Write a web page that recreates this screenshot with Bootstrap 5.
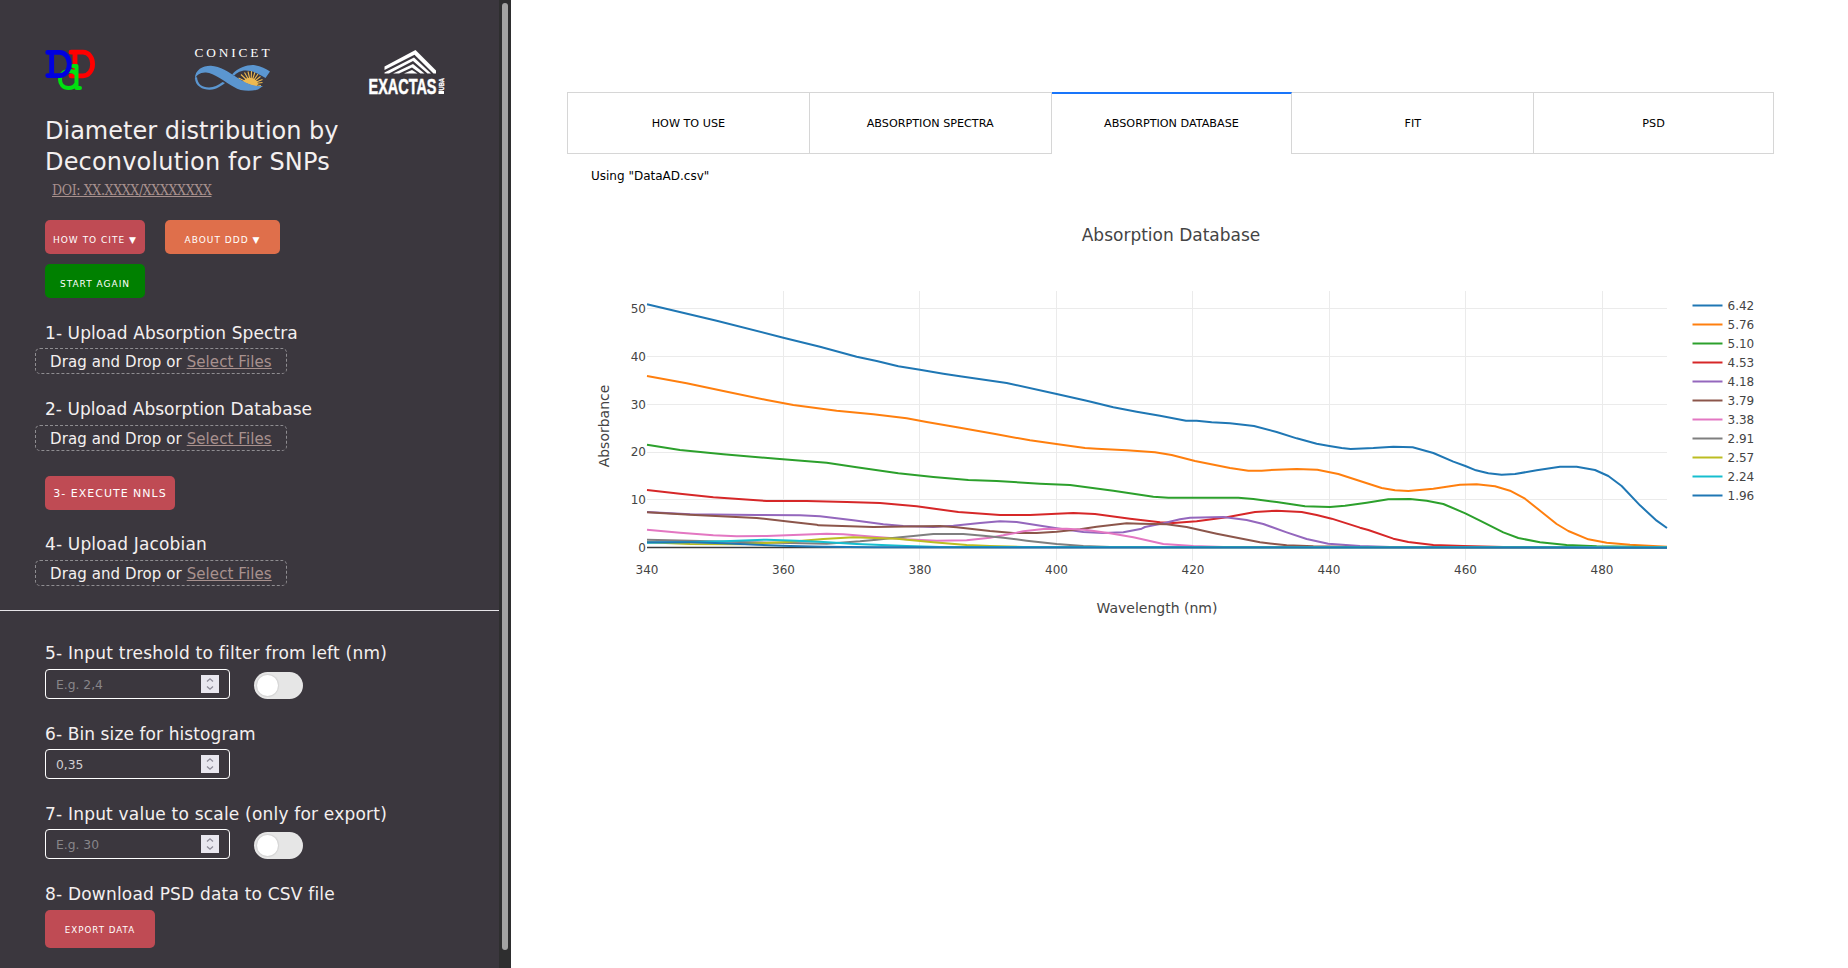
<!DOCTYPE html>
<html lang="en">
<head>
<meta charset="utf-8">
<meta name="viewport" content="width=device-width, initial-scale=1">
<title>Diameter distribution by Deconvolution for SNPs</title>
<link href="https://cdn.jsdelivr.net/npm/bootstrap@5.3.0/dist/css/bootstrap.min.css" rel="stylesheet">
<style>
body{font-family:"DejaVu Sans",sans-serif;background:#fff;height:968px;overflow:hidden}
.side{width:511px;background:#3b373e;color:#f4f0f0}
.side-body{width:499px;padding-top:46px}
.track{width:12px;background:#2e2e2f}
.thumb{width:6px;height:947px;margin:3px;border-radius:3px;background:#a3a3a3}
.pad{padding-left:45px}
.logos{height:70px}
h1{font-size:24px;line-height:31px;margin:0}
h1 .second{letter-spacing:.17px}
h2{font-size:17px;line-height:20px;margin:0}
.ls-a{letter-spacing:.09px}
.ls-b{letter-spacing:.04px}
.ls-c{letter-spacing:.15px}
.ls-d{letter-spacing:.23px}
.ls-e{letter-spacing:.1px}
.ls-f{letter-spacing:.2px}
.doi{font:14px/18px "DejaVu Serif Condensed","DejaVu Serif",serif;font-stretch:condensed;letter-spacing:-.38px;margin:3px 0 0 7px}
.side a{color:#a8918e}
.act{font-size:9px;letter-spacing:1px;height:34px;padding:6px 0 0 0;border:0;border-radius:5px;color:#fff;background:#bf4b54;line-height:1}
.act:hover{color:#fff;background:#a8424a}
.w100{width:100px}
.orange{background:#df6f4b;width:115px}
.green{background:#008000}
.exec{width:130px;font-size:11px;padding-top:0}
.export{width:110px;height:38px;padding-top:2px;font-size:8.7px}
.drop{width:252px;height:26px;margin:5px 0 0 -10px;border:1px dashed #8f8d91;border-radius:5px;font-size:15px;line-height:26px;letter-spacing:.09px;padding-left:14px}
.rule{height:1px;background:#e6e4e8;margin-top:24px}
.num{width:185px;height:30px;border:1px solid #fff;border-radius:4px;font-size:12.3px;color:#d2d0d3;padding:0 10px}
.num span{padding-top:2px}
.num .ph{color:#88868a}
.spin{width:18px;height:18px;background:#e9e7ef}
.tog{width:49px;height:27px;border-radius:14px;background:#e6e6e6;padding:3px;margin:3px 0 0 24px}
.knob{width:21px;height:21px;border-radius:50%;background:#fff;box-shadow:0 0 1px 1px #d4d4d4}
.main-pane{padding:92px 74px 0 56px}
.tabs-row{height:62px}
.tab-cell{flex:242 1 0;border:1px solid #d6d6d6;border-left-width:0;padding-top:2px;font-size:11.2px;color:#000}
.tab-cell:first-child{border-left-width:1px}
.tab-cell.on{flex-grow:241;border-top:2px solid #1975fa;border-bottom:0;padding-top:1px}
.tab-cell:last-child{flex-grow:240}
.using{font-size:12px;line-height:20px;color:#000;margin:12px 0 0 24px}
text{white-space:pre}
</style>
</head>
<body>
<div class="d-flex h-100">
<aside class="side d-flex flex-shrink-0">
<div class="side-body">
<svg class="logos d-block" width="499" viewBox="0 46 499 70">
  <g fill="none" stroke-width="4.8" stroke-linecap="round" stroke-linejoin="round">
    <path stroke="#f00" d="M71 52.2H83C89 52.2 92.6 58 92.6 64S89 75.800 83 75.800H71M75 52.2V75.800"/>
    <path stroke="#00e010" d="M73 66H76.500V88H80M76 74C74 71 71.500 71 69.500 71C63 71 60 75 60 79.500S63 88 68.500 88C73 88 75 86 76 84" stroke-width="4"/>
    <path stroke="#0000e0" d="M47.700 52.4H59.500C65.500 52.4 69.300 58 69.300 64S65.500 75.600 59.500 75.600H47.700M51.700 52.4V75.600"/>
  </g>
  <text x="194.500" y="57" font-family="Liberation Serif,serif" font-size="13.300" fill="#fff" textLength="75">CONICET</text>
  <path stroke="#edb950" stroke-width="1.100" fill="none" d="M251 84L238.500 78M251 84L241 74.500M251 84L244.500 72.500M251 84L248 71.500M251 84L251.500 71M251 84L255 72M251 84L258 74M251 84L260.500 76.500M251 84L262.500 79.500M251 84L262.500 82.500M251 84L261 85.500"/>
  <path fill="#edb950" d="M243 82A8 7.500 0 0 1 258 84L256 87Z"/>
  <path fill="#5b96d0" d="M195 80C194 70 203 65.500 211 65.800C220 66.500 229 72 237 77.500C246 83.500 253 86.500 263 86L258 89.500C250 92 240 91 234 87C225 82 214 73 206 72.500C200 72.200 196 75 195 80Z"/>
  <path fill="#5b96d0" d="M195 78C195 86 203 90 210 89.800C217 89.400 221 86 225 83L222.500 82C218 85 214 87.500 209 87.500C202 87.500 197.500 84 197 77Z"/>
  <path fill="#5b96d0" d="M232 74.500C239 67 248 64.500 255 65.200C261 66 266 69 270 71.500L265.500 78C257 72.500 249 69.500 242 71C238 72 236 73.500 234.500 75.500Z"/>
  <g fill="#fff">
    <path d="M384.500 66.500L415.500 50L436 70.500V73.500H433.500L414.500 54.800L384.500 70Z"/>
    <path d="M384.500 73.500V72.500L414 57.500L431 73.500H427.500L413 61L389 73.500Z"/>
    <path d="M393 73.500L413 64L424.500 73.500H420.500L412 67.500L399 73.500Z"/>
    <path d="M404 73.500L412 70L417.500 73.500Z"/>
  </g>
  <text x="368.500" y="94" font-family="Liberation Sans Narrow,Liberation Sans,sans-serif" font-weight="bold" font-size="22.500" fill="#fff" stroke="#fff" stroke-width=".5" textLength="68" lengthAdjust="spacingAndGlyphs">EXACTAS</text>
  <rect x="438.500" y="91" width="5.500" height="3" fill="#fff"/>
  <text transform="translate(444 90.500) rotate(-90)" font-family="Liberation Sans,sans-serif" font-weight="bold" font-size="7.500" fill="#fff" stroke="#fff" stroke-width=".3" textLength="12.500" lengthAdjust="spacingAndGlyphs">UBA</text>
</svg>
<div class="pad">
<h1 class="fw-normal">Diameter distribution by<br><span class="second">Deconvolution for SNPs</span></h1>
<div class="doi"><a href="#">DOI: XX.XXXX/XXXXXXXX</a></div>
<div class="d-flex" style="margin-top:21px"><button class="btn act w100">HOW TO CITE ▼</button><button class="btn act orange" style="margin-left:20px">ABOUT DDD ▼</button></div>
<button class="btn act w100 green d-block" style="margin-top:10px">START AGAIN</button>
<h2 class="fw-normal ls-a" style="margin-top:25px">1- Upload Absorption Spectra</h2>
<div class="drop">Drag and Drop or <a href="#">Select Files</a></div>
<h2 class="fw-normal ls-b" style="margin-top:25px">2- Upload Absorption Database</h2>
<div class="drop" style="margin-top:6px">Drag and Drop or <a href="#">Select Files</a></div>
<button class="btn act exec d-block" style="margin-top:25px">3- EXECUTE NNLS</button>
<h2 class="fw-normal ls-c" style="margin-top:24px">4- Upload Jacobian</h2>
<div class="drop" style="margin-top:6px">Drag and Drop or <a href="#">Select Files</a></div>
</div>
<div class="rule"></div>
<div class="pad">
<h2 class="fw-normal ls-d" style="margin-top:32px">5- Input treshold to filter from left (nm)</h2>
<div class="d-flex" style="margin-top:6px"><div class="num d-flex align-items-center justify-content-between"><span class="ph">E.g. 2,4</span><svg class="spin" viewBox="0 0 18 18"><path d="M6 6.500L9 3.800L12 6.500M6 11.500L9 14.200L12 11.500" fill="none" stroke="#8e8b98" stroke-width="1.300"/></svg></div><div class="tog"><div class="knob"></div></div></div>
<h2 class="fw-normal ls-e" style="margin-top:25px">6- Bin size for histogram</h2>
<div class="num d-flex align-items-center justify-content-between" style="margin-top:5px"><span>0,35</span><svg class="spin" viewBox="0 0 18 18"><path d="M6 6.500L9 3.800L12 6.500M6 11.500L9 14.200L12 11.500" fill="none" stroke="#8e8b98" stroke-width="1.300"/></svg></div>
<h2 class="fw-normal ls-f" style="margin-top:25px">7- Input value to scale (only for export)</h2>
<div class="d-flex" style="margin-top:5px"><div class="num d-flex align-items-center justify-content-between"><span class="ph">E.g. 30</span><svg class="spin" viewBox="0 0 18 18"><path d="M6 6.500L9 3.800L12 6.500M6 11.500L9 14.200L12 11.500" fill="none" stroke="#8e8b98" stroke-width="1.300"/></svg></div><div class="tog"><div class="knob"></div></div></div>
<h2 class="fw-normal ls-f" style="margin-top:25px">8- Download PSD data to CSV file</h2>
<button class="btn act export d-block" style="margin-top:6px">EXPORT DATA</button>
</div>
</div>
<div class="track"><div class="thumb"></div></div>
</aside>
<main class="main-pane flex-grow-1">
<div class="tabs-row d-flex">
<div class="tab-cell d-flex align-items-center justify-content-center">HOW TO USE</div>
<div class="tab-cell d-flex align-items-center justify-content-center">ABSORPTION SPECTRA</div>
<div class="tab-cell on d-flex align-items-center justify-content-center">ABSORPTION DATABASE</div>
<div class="tab-cell d-flex align-items-center justify-content-center">FIT</div>
<div class="tab-cell d-flex align-items-center justify-content-center">PSD</div>
</div>
<div class="using">Using "DataAD.csv"</div>
<svg class="d-block" id="chart" width="1207" height="450" viewBox="567 186 1207 450" font-family="DejaVu Sans,sans-serif" font-size="12" fill="#444">
  <text x="1171" y="241" font-size="17" text-anchor="middle">Absorption Database</text>
  <path stroke="#ebebeb" fill="none" d="M783.500 291V560.500M919.500 291V560.500M1056.500 291V560.500M1192.500 291V560.500M1329.500 291V560.500M1465.500 291V560.500M1602.500 291V560.500M647 308.500H1667M647 356.500H1667M647 404.500H1667M647 452.500H1667M647 499.500H1667"/>
  <g text-anchor="end"><text x="646" y="313">50</text><text x="646" y="361">40</text><text x="646" y="409">30</text><text x="646" y="456">20</text><text x="646" y="504">10</text><text x="646" y="552">0</text></g>
  <g text-anchor="middle"><text x="647" y="574">340</text><text x="783.500" y="574">360</text><text x="920" y="574">380</text><text x="1056.500" y="574">400</text><text x="1193" y="574">420</text><text x="1329" y="574">440</text><text x="1465.500" y="574">460</text><text x="1602" y="574">480</text>
  <text x="1157" y="613" font-size="14">Wavelength (nm)</text>
  <text transform="translate(609 426) rotate(-90)" font-size="14">Absorbance</text></g>
  <path stroke="#3a3a3a" stroke-width="1.300" d="M647 547.500H1667"/>
  <g id="curves" transform="translate(590 280) scale(.33333)" fill="none" stroke-width="6" stroke-linejoin="round"></g>
  <g id="legend"></g>
</svg>
</main>
</div>
<script src="https://cdn.jsdelivr.net/npm/bootstrap@5.3.0/dist/js/bootstrap.bundle.min.js"></script>
<script>
const series = [
 ['6.42','#1f77b4','171,73 380,122 580,173 690,200 800,230 860,243 925,259 990,269 1060,281 1110,289 1250,309 1400,342 1490,362 1570,382 1640,395 1710,407 1788,422 1820,422 1865,427 1920,430 1992,438 2060,456 2120,475 2180,491 2218,498 2255,504 2282,507 2350,504 2410,500 2468,502 2530,519 2590,545 2626,558 2658,571 2695,580 2735,584 2775,582 2840,571 2910,560 2960,560 3015,570 3055,588 3095,618 3150,676 3200,722 3231,744'],
 ['5.76','#ff7f0e','171,288 290,310 400,333 530,360 610,375 740,392 850,403 950,415 1010,426 1110,443 1220,463 1320,481 1399,492 1485,504 1520,506 1610,511 1695,517 1745,525 1815,543 1920,564 1975,572 2015,572 2060,569 2120,567 2182,569 2245,582 2310,603 2375,624 2415,631 2455,633 2530,626 2610,614 2660,613 2715,619 2760,632 2805,656 2855,696 2900,732 2935,753 2995,778 3050,788 3120,794 3231,800'],
 ['5.10','#2ca02c','171,494 270,510 400,523 560,536 710,548 800,562 925,580 1030,591 1135,600 1220,603 1350,611 1440,615 1570,632 1690,650 1735,653 1945,653 1990,657 2060,666 2145,679 2220,681 2265,677 2330,668 2395,658 2460,657 2510,662 2560,672 2626,700 2670,722 2740,757 2785,774 2850,787 2930,795 3020,799 3231,802'],
 ['4.53','#d62728','171,630 270,641 370,652 530,663 650,663 770,666 870,669 980,679 1105,696 1230,705 1320,705 1400,701 1450,699 1515,702 1620,716 1710,727 1750,729 1820,724 1910,712 1995,696 2060,692 2135,696 2180,705 2225,716 2310,743 2335,750 2410,776 2455,786 2530,795 2620,798 2740,801 3231,802'],
 ['4.18','#9467bd','171,696 300,703 500,705 630,706 690,709 790,721 880,733 940,738 1030,741 1090,737 1170,729 1230,724 1280,726 1400,745 1480,756 1540,759 1600,757 1655,746 1665,741 1720,730 1770,718 1800,713 1900,711 1970,720 2020,732 2090,757 2150,777 2215,791 2310,798 2400,801 3231,802'],
 ['3.79','#8c564b','171,697 300,704 500,714 600,725 680,734 685,736 850,741 1050,738 1100,742 1200,753 1270,759 1340,759 1400,755 1470,748 1520,740 1610,730 1650,731 1730,733 1790,741 1880,761 2010,787 2090,796 2170,799 2300,801 3231,802'],
 ['3.38','#e377c2','171,749 270,758 370,766 440,769 530,768 630,764 710,761 760,763 850,770 950,778 1040,782 1130,781 1200,773 1240,766 1300,754 1360,747 1430,746 1490,750 1560,760 1630,772 1720,792 1810,798 1900,801 3231,802'],
 ['2.91','#7f7f7f','171,779 300,782 450,786 600,789 710,791 810,784 860,779 900,775 970,768 1030,762 1120,762 1180,767 1240,773 1310,782 1400,792 1480,798 1560,801 3231,802'],
 ['2.57','#bcbd22','171,787 300,792 450,793 600,785 700,777 790,772 920,776 1030,787 1130,795 1200,798 1300,801 3231,802'],
 ['2.24','#17becf','171,788 300,786 400,784 530,779 620,782 700,786 800,792 950,798 1050,801 3231,802'],
 ['1.96','#1f77b4','171,787 300,787 400,790 500,794 600,798 700,800 850,802 3231,803']
];
document.getElementById('curves').innerHTML = series.map(s => `<polyline stroke="${s[1]}" points="${s[2]}"/>`).join('');
document.getElementById('legend').innerHTML = series.map((s, i) => `<path d="M1692.500 ${305.5 + i * 19}h30" stroke="${s[1]}" stroke-width="2"/><text x="1727.500" y="${310 + i * 19}">${s[0]}</text>`).join('');
</script>
</body>
</html>
